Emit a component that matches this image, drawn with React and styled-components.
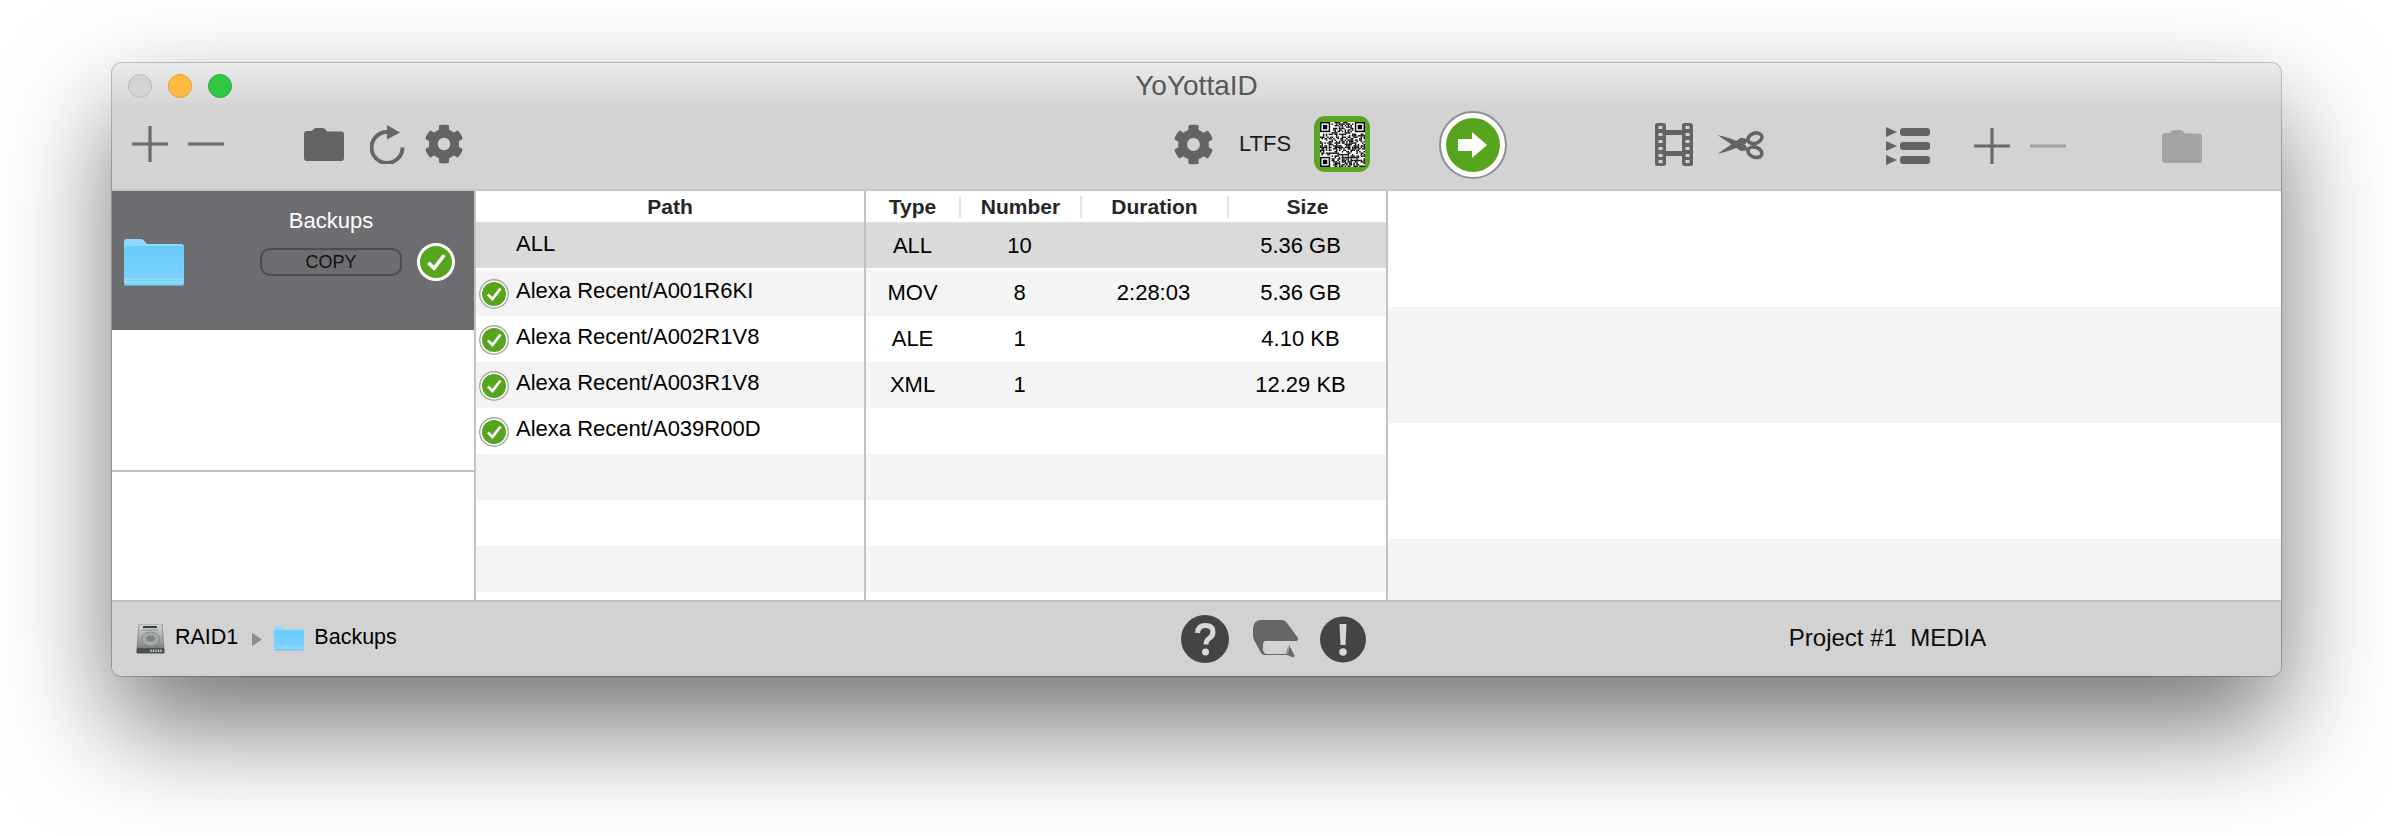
import styled, { createGlobalStyle } from "styled-components";
import { FaCog } from "react-icons/fa";

const GlobalStyle = createGlobalStyle`
  html, body {
    margin: 0;
    background: #fff;
    height: 836px;
    overflow: hidden;
  }
  * {
    box-sizing: border-box;
  }
`;

const Page = styled.div`
  padding: 63px 0 0 112px;
  font-family: "Liberation Sans", Arial, sans-serif;
  color: #000;
`;

const Window = styled.div`
  width: 2169px;
  height: 613px;
  border-radius: 10px;
  overflow: hidden;
  display: flex;
  flex-direction: column;
  background: #d2d2d2;
`;

const WindowShadow = styled.div`
  width: 2169px;
  height: 613px;
  border-radius: 10px;
  box-shadow: 0 50px 110px rgba(0, 0, 0, 0.55), 0 0 0 1px rgba(0, 0, 0, 0.22);
`;

const Header = styled.header`
  height: 128px;
  flex: none;
  background: linear-gradient(#ebebeb 0, #d3d3d3 46px);
  border-bottom: 2px solid #c6c6c6;
`;

const TitleBar = styled.div`
  height: 46px;
  display: grid;
  grid-template-columns: 1fr auto 1fr;
  align-items: center;
  padding: 0 16px;
`;

const Lights = styled.div`
  display: flex;
  gap: 16px;
`;

const Light = styled.span`
  width: 24px;
  height: 24px;
  border-radius: 50%;
  background: ${(p) => p.$fill};
  border: 1px solid ${(p) => p.$edge};
`;

const Title = styled.div`
  font-size: 28px;
  color: #585858;
`;

const Toolbar = styled.div`
  height: 70px;
  display: flex;
  align-items: center;
`;

const Tool = styled.span`
  display: flex;
  flex: none;
  margin-left: ${(p) => p.$gap}px;
  margin-top: ${(p) => p.$drop || 0}px;
`;

const ToolText = styled.span`
  flex: none;
  width: 54px;
  margin-left: 25px;
  font-size: 22px;
  color: #1c1c1c;
`;

const QrFrame = styled.span`
  flex: none;
  width: 56px;
  height: 56px;
  margin-left: 21px;
  border-radius: 11px;
  background: #5ba522;
  display: flex;
  align-items: center;
  justify-content: center;
`;

const GoButton = styled.span`
  flex: none;
  width: 68px;
  height: 68px;
  margin-left: 69px;
  margin-top: 2px;
  border-radius: 50%;
  border: 2px solid #8f8f8f;
  background: #fff;
  padding: 5px;
`;

const GoInner = styled.span`
  width: 100%;
  height: 100%;
  border-radius: 50%;
  background: #57a51f;
  display: flex;
  align-items: center;
  justify-content: center;
`;

const Body = styled.div`
  height: 409px;
  flex: none;
  display: flex;
  background: #fff;
  overflow: hidden;
`;

const Sources = styled.div`
  width: 362px;
  flex: none;
  display: flex;
  flex-direction: column;
`;

const SourceSelected = styled.div`
  height: 139px;
  flex: none;
  background: #6d6c71;
  display: flex;
  align-items: flex-start;
  padding: 48px 0 0 12px;
`;

const SourceEmpty = styled.div`
  height: 140px;
  flex: none;
  margin-top: 2px;
  border-bottom: 2px solid #bdbdbd;
`;

const SourceInfo = styled.div`
  margin-left: 76px;
  width: 142px;
  margin-top: -31px;
  display: flex;
  flex-direction: column;
  align-items: center;
`;

const SourceName = styled.div`
  font-size: 22px;
  line-height: 26px;
  color: #fff;
`;

const CopyPill = styled.div`
  width: 142px;
  height: 28px;
  margin-top: 14px;
  border: 2px solid #4c4c4e;
  border-radius: 10px;
  font-size: 18px;
  line-height: 24px;
  text-align: center;
  color: #111;
`;

const SourceCheck = styled.span`
  display: flex;
  margin: 4px 0 0 15px;
`;

const Divider = styled.div`
  width: 2px;
  flex: none;
  background: #c2c2c2;
`;

const Column = styled.div`
  width: ${(p) => p.$width}px;
  flex: none;
  display: flex;
  flex-direction: column;
`;

const HeadRow = styled.div`
  height: 32px;
  flex: none;
  display: grid;
  grid-template-columns: ${(p) => p.$cols};
  align-items: center;
  border-bottom: 1px solid #e2e2e2;
`;

const HeadCell = styled.div`
  font-size: 21px;
  font-weight: 700;
  line-height: 22px;
  text-align: center;
  color: #262626;
  border-left: ${(p) => (p.$rule ? "2px solid #e4e4e4" : "none")};
`;

const AllRow = styled.div`
  height: 45px;
  flex: none;
  margin-bottom: 2px;
  background: #dadada;
  display: grid;
  grid-template-columns: ${(p) => p.$cols};
  align-items: center;
`;

const Row = styled.div`
  height: 46px;
  flex: none;
  background: ${(p) => (p.$odd ? "#f4f4f4" : "#fff")};
  display: grid;
  grid-template-columns: ${(p) => p.$cols};
  align-items: center;
`;

const PathCell = styled.div`
  display: flex;
  align-items: center;
  padding-left: 3px;
  font-size: 22px;
  line-height: 26px;
`;

const AllPathCell = styled.div`
  padding-left: 40px;
  font-size: 22px;
  line-height: 26px;
  margin-top: -3px;
`;

const PathText = styled.span`
  margin-top: -4px;
`;

const RowCheck = styled.span`
  display: flex;
  margin: 2px 7px 0 0;
`;

const StatCell = styled.div`
  font-size: 22px;
  text-align: center;
  padding-right: ${(p) => p.$inset || 0}px;
`;

const Preview = styled.div`
  flex: 1;
  display: flex;
  flex-direction: column;
`;

const PreviewBand = styled.div`
  height: ${(p) => p.$height}px;
  flex: none;
  background: ${(p) => (p.$odd ? "#f4f4f4" : "#fff")};
`;

const StatusBar = styled.footer`
  flex: 1;
  display: flex;
  align-items: center;
  background: #d2d2d2;
  border-top: 2px solid #c2c2c2;
`;

const Crumb = styled.span`
  display: flex;
  flex: none;
  margin-left: ${(p) => p.$gap}px;
  margin-top: ${(p) => p.$lift || 0}px;
`;

const CrumbText = styled.span`
  flex: none;
  font-size: 21.5px;
  line-height: 26px;
  margin-left: ${(p) => p.$gap}px;
  margin-top: -4px;
`;

const ProjectName = styled.span`
  flex: none;
  margin-left: 423px;
  margin-top: -3px;
  font-size: 24px;
  white-space: pre;
  color: #0c0c0c;
`;

const Plus = ({ size = 36, color = "#6a6a6a" }) => (
  <svg width={size} height={size} viewBox="0 0 36 36">
    <path d="M0 18H36M18 0V36" stroke={color} strokeWidth="3.2" />
  </svg>
);

const Minus = ({ size = 36, color = "#6a6a6a" }) => (
  <svg width={size} height={size} viewBox="0 0 36 36">
    <path d="M0 18H36" stroke={color} strokeWidth="3.2" />
  </svg>
);

const ToolFolder = ({ color = "#636363" }) => (
  <svg width="40" height="33" viewBox="0 0 40 33">
    <path
      d="M0 6Q0 3 3 3H8Q10 0 12 0H19Q21 0 23 3.500H37Q40 3.500 40 6.500V30Q40 33 37 33H3Q0 33 0 30Z"
      fill={color}
    />
  </svg>
);

const Refresh = () => (
  <svg width="36" height="39" viewBox="0 0 36 39">
    <path
      d="M17 7A15.500 15.500 0 1 0 32.500 22.500"
      fill="none"
      stroke="#666"
      strokeWidth="4"
    />
    <path d="M17 0L30 7.500L17 14.500Z" fill="#666" />
  </svg>
);

const FILM_HOLES = [3, 10, 17, 24, 31, 37];

const Film = () => (
  <svg width="38" height="43" viewBox="0 0 38 43">
    <rect x="0" y="0" width="11" height="43" rx="2.500" fill="#636363" />
    <rect x="27" y="0" width="11" height="43" rx="2.500" fill="#636363" />
    <rect x="10" y="7" width="18" height="5" fill="#636363" />
    <rect x="10" y="28" width="18" height="5" fill="#636363" />
    {FILM_HOLES.map((y) => (
      <g key={y} fill="#d2d2d2">
        <rect x="3.500" y={y} width="4" height="3" />
        <rect x="30.500" y={y} width="4" height="3" />
      </g>
    ))}
  </svg>
);

const Scissors = () => (
  <svg width="48" height="29" viewBox="0 0 42 26">
    <path d="M0 3.500Q12 6 25 12.500L28 17L21 18Z" fill="#636363" />
    <path d="M0 20.500Q12 18 25 11.500L28 7.500L21 6Z" fill="#636363" />
    <ellipse
      cx="33.500"
      cy="6.500"
      rx="6.500"
      ry="4.500"
      transform="rotate(-20 33.500 6.500)"
      fill="none"
      stroke="#636363"
      strokeWidth="3.200"
    />
    <ellipse
      cx="33.500"
      cy="19"
      rx="6.500"
      ry="4.500"
      transform="rotate(20 33.500 19)"
      fill="none"
      stroke="#636363"
      strokeWidth="3.200"
    />
  </svg>
);

const QueueList = () => (
  <svg width="44" height="38" viewBox="0 0 44 38">
    {[0, 14, 28].map((y) => (
      <g key={y} fill="#636363">
        <path d={`M0 ${y}L11 ${y + 5}L0 ${y + 10}Z`} />
        <rect x="14" y={y + 1} width="30" height="8" rx="3" />
      </g>
    ))}
  </svg>
);

const ArrowRight = () => (
  <svg width="30" height="26" viewBox="0 0 30 26">
    <path d="M0 7H14V0L29 13L14 26V19H0Z" fill="#fff" />
  </svg>
);

// QR 모듈을 고정된 시드로 채움
const QR_SIZE = 31;

const isFinder = (x, y) => {
  const inBox = (ox, oy) => x >= ox && x < ox + 8 && y >= oy && y < oy + 8;
  return inBox(0, 0) || inBox(QR_SIZE - 8, 0) || inBox(0, QR_SIZE - 8);
};

const qrModules = () => {
  const cells = [];
  let seed = 7919;
  for (let y = 0; y < QR_SIZE; y++) {
    for (let x = 0; x < QR_SIZE; x++) {
      seed = (seed * 1103515245 + 12345) % 2147483648;
      if (!isFinder(x, y) && (seed >> 12) % 100 < 52) {
        cells.push(<rect key={`${x}-${y}`} x={x} y={y} width="1" height="1" />);
      }
    }
  }
  return cells;
};

const Finder = ({ x, y }) => (
  <>
    <rect x={x} y={y} width="7" height="7" />
    <rect x={x + 1} y={y + 1} width="5" height="5" fill="#fff" />
    <rect x={x + 2} y={y + 2} width="3" height="3" />
  </>
);

const QrCode = () => (
  <svg width="45" height="45" viewBox={`0 0 ${QR_SIZE} ${QR_SIZE}`}>
    <rect width={QR_SIZE} height={QR_SIZE} fill="#fff" />
    <g fill="#000">
      {qrModules()}
      <Finder x={0} y={0} />
      <Finder x={QR_SIZE - 7} y={0} />
      <Finder x={0} y={QR_SIZE - 7} />
    </g>
  </svg>
);

const CheckBadge = ({ size, ring, ringWidth, gap }) => {
  const c = size / 2;
  const s = size / 30;
  return (
    <svg width={size} height={size} viewBox={`0 0 ${size} ${size}`}>
      <circle cx={c} cy={c} r={c - ringWidth / 2} fill="#fff" stroke={ring} strokeWidth={ringWidth} />
      <circle cx={c} cy={c} r={c - ringWidth - gap} fill="#57a51f" />
      <path
        d={`M${c - 6 * s} ${c + 0.5 * s}L${c - 1.5 * s} ${c + 5 * s}L${c + 6.5 * s} ${c - 5.5 * s}`}
        fill="none"
        stroke="#fff"
        strokeWidth={2.8 * s}
      />
    </svg>
  );
};

const BlueFolder = ({ id, w, h }) => (
  <svg width={w} height={h} viewBox="0 0 60 47">
    <defs>
      <linearGradient id={id} x1="0" y1="0" x2="0" y2="1">
        <stop offset="0" stopColor="#68cbfb" />
        <stop offset="1" stopColor="#7ed3fd" />
      </linearGradient>
    </defs>
    <path
      d="M0 3Q0 0 3 0H17Q19 0 21 3L23 5H57Q60 5 60 8V20H0Z"
      fill="#8ddafe"
    />
    <path
      d="M0 9Q0 7 2 7H58Q60 7 60 9V44Q60 47 57 47H3Q0 47 0 44Z"
      fill={`url(#${id})`}
    />
    <path d="M0 40H60M0 43H60" stroke="#a5dff8" strokeWidth="1" />
    <path d="M1 46.500H59" stroke="#5fa9cd" strokeWidth="1" />
  </svg>
);

const Drive = () => (
  <svg width="29" height="30" viewBox="0 0 29 30">
    <defs>
      <linearGradient id="driveBody" x1="0" y1="0" x2="0" y2="1">
        <stop offset="0" stopColor="#d8dada" />
        <stop offset="1" stopColor="#7f8485" />
      </linearGradient>
    </defs>
    <path d="M3 0H26L28 24H1Z" fill="url(#driveBody)" stroke="#6b6f70" strokeWidth="0.6" />
    <rect x="7" y="2" width="14" height="2" fill="#3c3f40" />
    <rect x="6" y="5.500" width="16" height="1" fill="#8d9192" />
    <ellipse cx="14.500" cy="15" rx="9" ry="7" fill="#a3a8a9" stroke="#7d8182" strokeWidth="0.8" />
    <ellipse cx="14.500" cy="14.500" rx="4.500" ry="3" fill="#7e8384" />
    <rect x="0.500" y="24" width="28" height="5.500" rx="1" fill="#4d5051" />
    <path d="M15 25.500V28M17.500 25.500V28M20 25.500V28M22.500 25.500V28M25 25.500V28" stroke="#d9dcdc" strokeWidth="1.200" />
  </svg>
);

const CrumbArrow = () => (
  <svg width="10" height="13" viewBox="0 0 10 13">
    <path d="M0 0L10 6.500L0 13Z" fill="#8b8b8b" />
  </svg>
);

const HelpIcon = () => (
  <svg width="48" height="48" viewBox="0 0 48 48">
    <circle cx="24" cy="24" r="24" fill="#444" />
    <path
      d="M16.500 18Q17 10.500 24.500 10.500Q32 10.500 32 17Q32 21 28 23.500Q25 25.500 25 29.500"
      fill="none"
      stroke="#d8d8d8"
      strokeWidth="5"
    />
    <circle cx="24.500" cy="37" r="3.500" fill="#d8d8d8" />
  </svg>
);

const BookIcon = () => (
  <svg width="46" height="38" viewBox="0 0 46 38">
    <path
      d="M0 9Q0 0 9 0H28Q32 0 34 3L45 18Q46 21 43 21H13Q10 21 10 25V29Q10 33 13 33H33L35 25L41 36Q41 38 39 37L34 35H12Q9 35 8 33L1 20Q0 18 0 14Z"
      fill="#666"
    />
    <path d="M11 24Q11 21 14 21H36L33 34H14Q11 34 11 31Z" fill="#d2d2d2" />
    <path d="M35 21H42L41 36L34.500 34Z" fill="#d2d2d2" />
    <path d="M36 25L42 36.500L35 34.500Z" fill="#666" />
  </svg>
);

const AlertIcon = () => (
  <svg width="46" height="47" viewBox="0 0 46 47">
    <circle cx="23" cy="23.500" r="23" fill="#444" />
    <path d="M19.500 8H26.500L25.500 29H20.500Z" fill="#d8d8d8" />
    <circle cx="23" cy="36" r="3.800" fill="#d8d8d8" />
  </svg>
);

const PATH_COLS = "1fr";
const STAT_COLS = "93px 121px 147px 159px";

const paths = [
  "Alexa Recent/A001R6KI",
  "Alexa Recent/A002R1V8",
  "Alexa Recent/A003R1V8",
  "Alexa Recent/A039R00D",
];

const stats = [
  { type: "MOV", number: "8", duration: "2:28:03", size: "5.36 GB" },
  { type: "ALE", number: "1", duration: "", size: "4.10 KB" },
  { type: "XML", number: "1", duration: "", size: "12.29 KB" },
];

const bands = [116, 116, 116, 116];

const PathRows = () => {
  const rows = [];
  for (let i = 0; i < 8; i++) {
    const name = paths[i];
    rows.push(
      <Row key={i} $cols={PATH_COLS} $odd={i % 2 === 0}>
        {name && (
          <PathCell>
            <RowCheck>
              <CheckBadge size={30} ring="#a8a8a8" ringWidth={1.4} gap={1.6} />
            </RowCheck>
            <PathText>{name}</PathText>
          </PathCell>
        )}
      </Row>
    );
  }
  return rows;
};

const StatRows = () => {
  const rows = [];
  for (let i = 0; i < 8; i++) {
    const item = stats[i];
    rows.push(
      <Row key={i} $cols={STAT_COLS} $odd={i % 2 === 0}>
        {item && (
          <>
            <StatCell>{item.type}</StatCell>
            <StatCell>{item.number}</StatCell>
            <StatCell>{item.duration}</StatCell>
            <StatCell $inset={12}>{item.size}</StatCell>
          </>
        )}
      </Row>
    );
  }
  return rows;
};

const App = () => {
  return (
    <>
      <GlobalStyle />
      <Page>
        <WindowShadow>
          <Window>
            <Header>
              <TitleBar>
                <Lights>
                  <Light $fill="#d3d3d3" $edge="#bcbcbc" />
                  <Light $fill="#fdbc40" $edge="#e3a02e" />
                  <Light $fill="#33c748" $edge="#2aae3c" />
                </Lights>
                <Title>YoYottaID</Title>
              </TitleBar>
              <Toolbar>
                <Tool $gap={20}><Plus /></Tool>
                <Tool $gap={20}><Minus /></Tool>
                <Tool $gap={80}><ToolFolder /></Tool>
                <Tool $gap={26}><Refresh /></Tool>
                <Tool $gap={18}><FaCog size={40} color="#636363" /></Tool>
                <Tool $gap={709}><FaCog size={41} color="#636363" /></Tool>
                <ToolText>LTFS</ToolText>
                <QrFrame><QrCode /></QrFrame>
                <GoButton>
                  <GoInner><ArrowRight /></GoInner>
                </GoButton>
                <Tool $gap={148} $drop={1}><Film /></Tool>
                <Tool $gap={24} $drop={2}><Scissors /></Tool>
                <Tool $gap={121} $drop={4}><QueueList /></Tool>
                <Tool $gap={44} $drop={4}><Plus /></Tool>
                <Tool $gap={20} $drop={4}><Minus color="#a3a3a3" /></Tool>
                <Tool $gap={96} $drop={5}><ToolFolder color="#a3a3a3" /></Tool>
              </Toolbar>
            </Header>
            <Body>
              <Sources>
                <SourceSelected>
                  <BlueFolder id="sourceFolder" w={60} h={47} />
                  <SourceInfo>
                    <SourceName>Backups</SourceName>
                    <CopyPill>COPY</CopyPill>
                  </SourceInfo>
                  <SourceCheck>
                    <CheckBadge size={38} ring="#fff" ringWidth={3} gap={0} />
                  </SourceCheck>
                </SourceSelected>
                <SourceEmpty />
              </Sources>
              <Divider />
              <Column $width={388}>
                <HeadRow $cols={PATH_COLS}>
                  <HeadCell>Path</HeadCell>
                </HeadRow>
                <AllRow $cols={PATH_COLS}>
                  <AllPathCell>ALL</AllPathCell>
                </AllRow>
                <PathRows />
              </Column>
              <Divider />
              <Column $width={520}>
                <HeadRow $cols={STAT_COLS}>
                  <HeadCell>Type</HeadCell>
                  <HeadCell $rule>Number</HeadCell>
                  <HeadCell $rule>Duration</HeadCell>
                  <HeadCell $rule>Size</HeadCell>
                </HeadRow>
                <AllRow $cols={STAT_COLS}>
                  <StatCell>ALL</StatCell>
                  <StatCell>10</StatCell>
                  <StatCell />
                  <StatCell $inset={12}>5.36 GB</StatCell>
                </AllRow>
                <StatRows />
              </Column>
              <Divider />
              <Preview>
                {bands.map((height, i) => (
                  <PreviewBand key={i} $height={height} $odd={i % 2 === 1} />
                ))}
              </Preview>
            </Body>
            <StatusBar>
              <Crumb $gap={24}><Drive /></Crumb>
              <CrumbText $gap={10}>RAID1</CrumbText>
              <Crumb $gap={14}><CrumbArrow /></Crumb>
              <Crumb $gap={12} $lift={-2}><BlueFolder id="crumbFolder" w={30} h={25} /></Crumb>
              <CrumbText $gap={10}>Backups</CrumbText>
              <Crumb $gap={784}><HelpIcon /></Crumb>
              <Crumb $gap={24}><BookIcon /></Crumb>
              <Crumb $gap={21}><AlertIcon /></Crumb>
              <ProjectName>Project #1  MEDIA</ProjectName>
            </StatusBar>
          </Window>
        </WindowShadow>
      </Page>
    </>
  );
};

export default App;
